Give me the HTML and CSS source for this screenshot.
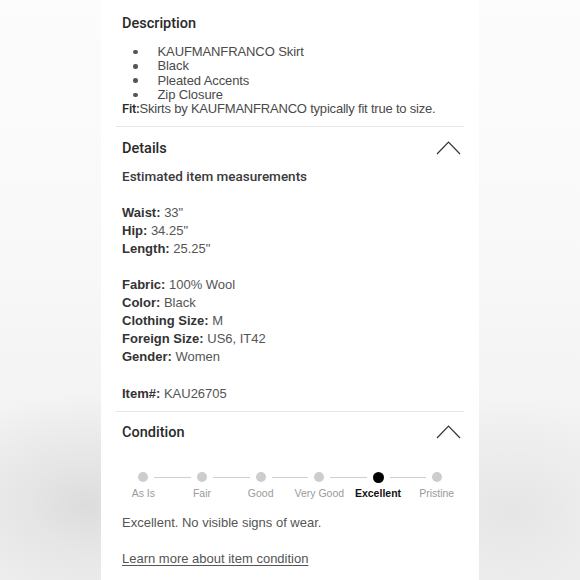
FILE: index.html
```html
<!DOCTYPE html>
<html>
<head>
<meta charset="utf-8">
<link rel="stylesheet" href="styles.css">
</head>
<body>
<main class="panel">
  <section class="desc">
    <h2 class="title">Description</h2>
    <ul class="bullets">
      <li>KAUFMANFRANCO Skirt</li>
      <li>Black</li>
      <li>Pleated Accents</li>
      <li>Zip Closure</li>
    </ul>
    <p class="fit"><b>Fit:</b>Skirts by KAUFMANFRANCO typically fit true to size.</p>
  </section>
  <hr class="divider">
  <section class="details">
    <div class="head">
      <h2 class="title">Details</h2>
      <svg class="chev" width="25" height="15" viewBox="0 0 25 15"><path d="M1 14 L12.5 2 L24 14" fill="none" stroke="#333" stroke-width="1.2"/></svg>
    </div>
    <p class="sub">Estimated item measurements</p>
    <div class="group">
      <p class="row"><b>Waist:</b> 33"</p>
      <p class="row"><b>Hip:</b> 34.25"</p>
      <p class="row"><b>Length:</b> 25.25"</p>
    </div>
    <div class="group">
      <p class="row"><b>Fabric:</b> 100% Wool</p>
      <p class="row"><b>Color:</b> Black</p>
      <p class="row"><b>Clothing Size:</b> M</p>
      <p class="row"><b>Foreign Size:</b> US6, IT42</p>
      <p class="row"><b>Gender:</b> Women</p>
    </div>
    <div class="group item">
      <p class="row"><b>Item#:</b> KAU26705</p>
    </div>
  </section>
  <hr class="divider">
  <section class="condition">
    <div class="head">
      <h2 class="title">Condition</h2>
      <svg class="chev" width="25" height="15" viewBox="0 0 25 15"><path d="M1 14 L12.5 2 L24 14" fill="none" stroke="#333" stroke-width="1.2"/></svg>
    </div>
    <div class="tracker">
      <div class="step first"><div class="track"><span class="seg"></span><span class="dot"></span><span class="seg"></span></div><span class="lbl">As Is</span></div>
      <div class="step"><div class="track"><span class="seg"></span><span class="dot"></span><span class="seg"></span></div><span class="lbl">Fair</span></div>
      <div class="step"><div class="track"><span class="seg"></span><span class="dot"></span><span class="seg"></span></div><span class="lbl">Good</span></div>
      <div class="step"><div class="track"><span class="seg"></span><span class="dot"></span><span class="seg"></span></div><span class="lbl">Very Good</span></div>
      <div class="step active"><div class="track"><span class="seg"></span><span class="dot"></span><span class="seg"></span></div><span class="lbl">Excellent</span></div>
      <div class="step last"><div class="track"><span class="seg"></span><span class="dot"></span><span class="seg"></span></div><span class="lbl">Pristine</span></div>
    </div>
    <p class="cond-text">Excellent. No visible signs of wear.</p>
    <a class="learn" href="#">Learn more about item condition</a>
  </section>
</main>
</body>
</html>
```

FILE: styles.css
```css
html, body {
  margin: 0;
  padding: 0;
  height: 100%;
}
body {
  font-family: "Liberation Sans", Arial, sans-serif;
  background:
    radial-gradient(ellipse 160px 110px at 15% 87%, #dcdcdc 0%, #e6e6e6 40%, rgba(240,240,240,0) 100%),
    radial-gradient(ellipse 140px 110px at 88% 88%, #e6e6e6 0%, rgba(240,240,240,0) 100%),
    linear-gradient(#fcfcfc 0%, #f8f8f8 45%, #f2f2f2 75%, #efefef 100%);
  display: flex;
  justify-content: center;
  overflow: hidden;
}
.panel {
  width: 378px;
  height: 580px;
  box-sizing: border-box;
  background: #fff;
  padding: 14px 21px 0;
}
.title {
  margin: 0;
  font-family: Roboto, "Liberation Sans", sans-serif;
  font-size: 14.5px;
  line-height: 20px;
  font-weight: 500;
  color: #2a2a2a;
}
.bullets {
  list-style: none;
  margin: 11px 0 0;
  padding: 0;
}
.bullets li {
  display: flex;
  align-items: center;
  font-size: 13px;
  line-height: 14.3px;
  color: #4a4a4a;
  letter-spacing: -0.1px;
}
.bullets li::before {
  content: "";
  width: 4.5px;
  height: 4.5px;
  border-radius: 50%;
  background: #555;
  margin: 0 20px 0 11px;
  flex: none;
}
.fit {
  margin: 0;
  font-size: 13px;
  line-height: 14.3px;
  color: #4a4a4a;
  letter-spacing: -0.2px;
}
.fit b {
  font-family: Roboto, "Liberation Sans", sans-serif;
  font-weight: 500;
  color: #2a2a2a;
}
.divider {
  border: 0;
  height: 1px;
  background: #e6e6e6;
  margin: 10px -6px 0;
}
.head {
  display: flex;
  justify-content: space-between;
  align-items: center;
  margin-top: 12px;
}
.condition .head {
  margin-top: 11px;
}
.chev {
  margin-right: -3px;
  margin-bottom: 4px;
}
.sub {
  margin: 8px 0 0;
  font-family: Roboto, "Liberation Sans", sans-serif;
  font-size: 13.5px;
  line-height: 18px;
  font-weight: 500;
  color: #3a3a3a;
}
.group {
  margin-top: 18px;
}
.sub + .group {
  margin-top: 19px;
}
.group.item {
  margin-top: 19px;
}
.row {
  margin: 0;
  font-size: 13px;
  line-height: 18px;
  color: #555;
}
.row b {
  font-weight: 700;
  color: #333;
}
.details {
  padding-bottom: 8px;
}
.details + .divider {
  margin-top: 0;
}
.tracker {
  display: grid;
  grid-template-columns: repeat(6, 1fr);
  margin: 28px -8px 0;
}
.step {
  display: flex;
  flex-direction: column;
  align-items: center;
}
.track {
  display: flex;
  align-items: center;
  width: 100%;
  height: 12px;
}
.seg {
  flex: 1;
  height: 1.5px;
  background: #cfcfcf;
}
.seg:first-child {
  margin-right: 6px;
}
.seg:last-child {
  margin-left: 6px;
}
.first .seg:first-child,
.last .seg:last-child {
  background: transparent;
}
.dot {
  width: 10px;
  height: 10px;
  border-radius: 50%;
  background: #cdcdcd;
  flex: none;
}
.active .dot {
  width: 11px;
  height: 11px;
  background: #000;
}
.lbl {
  margin-top: 3px;
  font-size: 10.5px;
  line-height: 14px;
  color: #9a9a9a;
  white-space: nowrap;
}
.active .lbl {
  color: #111;
  font-weight: 700;
}
.cond-text {
  margin: 14px 0 0;
  font-size: 13px;
  line-height: 18px;
  color: #555;
}
.learn {
  display: inline-block;
  margin-top: 18px;
  font-size: 13px;
  line-height: 18px;
  color: #555;
  text-decoration: underline;
  text-underline-offset: 2px;
}
```
